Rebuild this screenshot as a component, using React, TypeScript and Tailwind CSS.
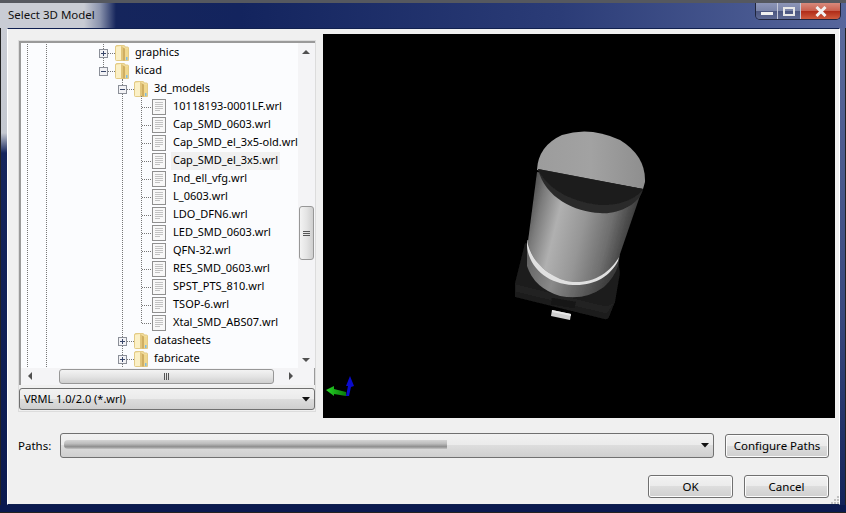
import React from 'react';

type Row = {
  label: string;
  kind: 'folder' | 'file';
  level: 0 | 1 | 2;
  box?: 'plus' | 'minus';
  guides: number[];
  selected?: boolean;
};

const files = [
  '10118193-0001LF.wrl',
  'Cap_SMD_0603.wrl',
  'Cap_SMD_el_3x5-old.wrl',
  'Cap_SMD_el_3x5.wrl',
  'Ind_ell_vfg.wrl',
  'L_0603.wrl',
  'LDO_DFN6.wrl',
  'LED_SMD_0603.wrl',
  'QFN-32.wrl',
  'RES_SMD_0603.wrl',
  'SPST_PTS_810.wrl',
  'TSOP-6.wrl',
  'Xtal_SMD_ABS07.wrl',
];

const rows: Row[] = [
  { label: 'graphics', kind: 'folder', level: 0, box: 'plus', guides: [82] },
  { label: 'kicad', kind: 'folder', level: 0, box: 'minus', guides: [] },
  { label: '3d_models', kind: 'folder', level: 1, box: 'minus', guides: [101] },
  ...files.map((label): Row => ({
    label,
    kind: 'file',
    level: 2,
    guides: [101],
    selected: label === 'Cap_SMD_el_3x5.wrl',
  })),
  { label: 'datasheets', kind: 'folder', level: 1, box: 'plus', guides: [101] },
  { label: 'fabricate', kind: 'folder', level: 1, box: 'plus', guides: [101] },
];

const Folder = ({ x }: { x: number }) => (
  <g transform={`translate(${x} 1)`}>
    <path d="M0.5 2 Q0.5 0.5 2 0.5 L9 0.5 Q10 0.5 10 2 L12.5 2 Q13.5 2 13.5 3 L13.5 15.5 L1.5 15.5 Q0.5 15.5 0.5 14.5 Z" fill="#f2dd9c" stroke="#e3cb86" />
    <path d="M1 2 L6 1 L6 15 L1 15 Z" fill="#fbf0c6" />
    <path d="M6 1 L8 2 L8 15.5 L6 15.5 Z" fill="#e2c67c" />
    <path d="M8 2.5 L10 3.5 L10 15.5 L8 15.5 Z" fill="#cfae62" />
    <path d="M10 4 L13 4 L13 15 L10 15 Z" fill="#f0d88f" />
    <rect x="11" y="12" width="1.5" height="3" fill="#7fbbe0" />
  </g>
);

const FileIcon = ({ x }: { x: number }) => (
  <g transform={`translate(${x} 1)`} shapeRendering="crispEdges">
    <rect x="0.5" y="0.5" width="13" height="15" rx="1" fill="#f8f8f8" stroke="#8f8f8f" />
    {[3, 5, 7, 9, 11].map((y) => (
      <line key={y} x1="3" x2={y === 11 ? 8 : 11} y1={y + 0.5} y2={y + 0.5} stroke="#c2c2c2" />
    ))}
  </g>
);

const Expander = ({ x, type }: { x: number; type: 'plus' | 'minus' }) => (
  <g shapeRendering="crispEdges">
    <rect x={x + 0.5} y="5.5" width="8" height="8" fill="#f2f2f5" stroke="#8b8f98" />
    <line x1={x + 2} x2={x + 7} y1="9.5" y2="9.5" stroke="#39476a" />
    {type === 'plus' && <line x1={x + 4.5} x2={x + 4.5} y1="7" y2="12" stroke="#39476a" />}
  </g>
);

const dotted = { stroke: '#777', strokeDasharray: '1 1', shapeRendering: 'crispEdges' as const };

const TreeRow = ({ row }: { row: Row }) => {
  const width = row.level === 0 ? 112 : row.level === 1 ? 131 : 150;
  const isLastFile = row.label === 'Xtal_SMD_ABS07.wrl';
  const boxX = row.level === 0 ? 78 : 97;
  return (
    <div className="flex h-[18px] shrink-0 items-center whitespace-nowrap">
      <svg width={width} height={18} className="shrink-0">
        <line x1="6.5" x2="6.5" y1="0" y2="18" {...dotted} />
        <line x1="25.5" x2="25.5" y1="0" y2="18" {...dotted} />
        {row.guides.map((g) => (
          <line key={g} x1={g + 0.5} x2={g + 0.5} y1="0" y2="18" {...dotted} />
        ))}
        {row.label === 'kicad' && <line x1="82.5" x2="82.5" y1="0" y2="9" {...dotted} />}
        {row.label === 'kicad' && <line x1="101.5" x2="101.5" y1="15" y2="18" {...dotted} />}
        {row.kind === 'folder' && (
          <>
            <line x1={boxX + 9} x2={boxX + 16} y1="9.5" y2="9.5" {...dotted} />
            <Expander x={boxX} type={row.box ?? 'plus'} />
            <Folder x={boxX + 16} />
          </>
        )}
        {row.level === 1 && row.box === 'minus' && <line x1="120.5" x2="120.5" y1="16" y2="18" {...dotted} />}
        {row.kind === 'file' && (
          <>
            <line x1="120.5" x2="120.5" y1="0" y2={isLastFile ? 9 : 18} {...dotted} />
            <line x1="121" x2="131" y1="9.5" y2="9.5" {...dotted} />
            <FileIcon x={131} />
          </>
        )}
      </svg>
      <span className={`flex h-[18px] items-center px-[2px] pb-[1px] text-[11px] text-black ${row.selected ? 'bg-[#f0f0f0]' : ''}`}>
        {row.label}
      </span>
    </div>
  );
};

const Arrow = ({ dir }: { dir: 'up' | 'down' | 'left' | 'right' }) => {
  const points = {
    up: '0,5 8,5 4,1',
    down: '0,1 8,1 4,5',
    left: '6,0 6,8 2,4',
    right: '2,0 2,8 6,4',
  }[dir];
  const vertical = dir === 'up' || dir === 'down';
  return (
    <svg width={vertical ? 9 : 8} height={vertical ? 6 : 9}>
      <polygon points={points} fill="#505050" />
    </svg>
  );
};

const DropArrow = () => (
  <svg width="8" height="5">
    <polygon points="0,0 8,0 4,4.5" fill="#111" />
  </svg>
);

const Button = ({ label, className }: { label: string; className: string }) => (
  <div className={`flex items-center justify-center rounded-[3px] border border-[#707070] bg-[linear-gradient(180deg,#f2f2f2_0%,#ebebeb_48%,#dddddd_50%,#cfcfcf_100%)] text-[11.5px] text-black shadow-[inset_0_0_0_1px_#fcfcfc] ${className}`}>
    {label}
  </div>
);

const Model = () => (
  <svg viewBox="323 34 512 384" width="512" height="384" className="block">
    <defs>
      <linearGradient id="body" gradientUnits="userSpaceOnUse" x1="526" y1="212" x2="630" y2="238">
        <stop offset="0" stopColor="#4e4e4e" />
        <stop offset="0.12" stopColor="#7c7c7c" />
        <stop offset="0.3" stopColor="#b0b0b0" />
        <stop offset="0.55" stopColor="#969696" />
        <stop offset="0.8" stopColor="#6e6e6e" />
        <stop offset="1" stopColor="#3a3a3a" />
      </linearGradient>
      <linearGradient id="lower" x1="0" y1="0" x2="1" y2="0.2">
        <stop offset="0" stopColor="#5c5c5c" />
        <stop offset="0.4" stopColor="#8a8a8a" />
        <stop offset="1" stopColor="#3a3a3a" />
      </linearGradient>
      <linearGradient id="top" x1="0" y1="0" x2="1" y2="0">
        <stop offset="0" stopColor="#9c9c9c" />
        <stop offset="0.5" stopColor="#a2a2a2" />
        <stop offset="1" stopColor="#8e8e8e" />
      </linearGradient>
      <filter id="soft">
        <feGaussianBlur stdDeviation="0.5" />
      </filter>
      <linearGradient id="axisG" x1="0" y1="0" x2="1" y2="0">
        <stop offset="0" stopColor="#26d626" />
        <stop offset="1" stopColor="#0a7a0a" />
      </linearGradient>
    </defs>
    <g filter="url(#soft)">
      <path d="M525 243 L515 283 L515 297 L604 319 Q608 320 609 317 L615 302 L620 273 L618 260 Z" fill="#1b1b1b" />
      <path d="M516 284 L606 306 L615 302 L607 314 L515 292 Z" fill="#202020" />
      <path d="M552 298 L576 302 L574 308 L551 304 Z" fill="#161616" />
      <path d="M527 240 L527 266 Q534 288 560 296 Q585 301 604 287 Q614 278 618 266 L620 255 Z" fill="url(#lower)" />
      <path d="M537 172 L528 241 C530 262 552 280 573 282 C595 283 610 272 619 257 L642 190 Z" fill="url(#body)" />
      <path d="M527 240 C530 262 552 280 573 282 C595 283 610 272 619 257 L618 261 C610 276 595 286 573 285 C548 284 529 268 527 246 Z" fill="#e0e0e0" />
      <path d="M537 170 Q538 146 562 135 Q590 126 620 140 Q646 156 645 182 L643 189 Z" fill="url(#top)" />
      <path d="M538 169 L643 189 C640 205 616 215 600 213 C575 212 545 198 538 169 Z" fill="#2a2a2a" />
      <path d="M538 169 L643 189 C636 200 616 206 600 205 C578 203 548 192 538 169 Z" fill="#1d1d1d" />
    </g>
    <polygon points="552,310 571,314 570,320 551,316" fill="#cfcfcf" />
    <polygon points="552,310 571,314 571,316 552,312" fill="#e8e8e8" />
    <polygon points="326,390 334,386 334,389 346,392 346,396 334,394 334,396" fill="url(#axisG)" />
    <polygon points="346,396 348,386 346,386 350,376 354,386 351,387 349,396" fill="#0a0acc" />
  </svg>
);

export default function App() {
  return (
    <div className="flex h-[513px] w-[846px] flex-col overflow-hidden bg-[#0b1a4f] font-['Noto_Sans',sans-serif]">
      {/* title bar */}
      <div className="flex h-[28px] shrink-0 justify-between border-t-[3px] border-t-[#55585f] bg-[linear-gradient(90deg,#c9ccd4_0,#c9ccd4_84px,#8a93ad_100px,#15255c_116px,#13245e_240px,#2b3c77_560px,#56669c_846px)]">
        <div className="flex items-center pb-[1px] pl-[8px] text-[11.5px] text-[#111]">Select 3D Model</div>
        <div className="mr-[5px] flex h-[17px] rounded-b-[5px] border border-t-0 border-[#20253c]">
          <div className="flex w-[22px] items-center justify-center rounded-bl-[4px] border-r border-[#c4c8d8] bg-[linear-gradient(180deg,#8d96b8_0%,#7a84a8_48%,#4c5680_52%,#5f6a94_100%)]">
            <div className="mt-[4px] h-[3px] w-[12px] bg-[#f0f0f0]" />
          </div>
          <div className="flex w-[23px] items-center justify-center border-r border-[#c4c8d8] bg-[linear-gradient(180deg,#8d96b8_0%,#7a84a8_48%,#4c5680_52%,#5f6a94_100%)]">
            <div className="h-[9px] w-[12px] border-2 border-[#e8e8e8]" />
          </div>
          <div className="flex w-[39px] items-center justify-center rounded-br-[4px] bg-[linear-gradient(180deg,#d88a7c_0%,#c9604e_48%,#b02c18_52%,#cf5a3c_100%)]">
            <svg width="12" height="11">
              <path d="M1.5 1 L10.5 10 M10.5 1 L1.5 10" stroke="#f2f2f2" strokeWidth="3" />
            </svg>
          </div>
        </div>
      </div>

      <div className="flex h-[477px] shrink-0">
        {/* left window edge */}
        <div className="w-[7px] shrink-0 border-l border-l-[#222] bg-[linear-gradient(180deg,#c9ccd4_0,#c4c8d0_105px,#15255c_125px,#0b1a4f_100%)]" />
        {/* dialog body */}
        <div className="flex w-[833px] shrink-0 flex-col border border-b-[#10204f] border-l-white border-r-white border-t-[#10204f] bg-[#f0f0f0]">
          <div className="flex h-[389px] shrink-0 pl-[10px] pt-[5px]">
            {/* tree and filter */}
            <div className="mt-[6px] flex h-[372px] w-[298px] shrink-0 flex-col border border-[#dcdcdc]">
              <div className="flex h-[344px] shrink-0 flex-col border-b border-l-2 border-r border-t-2 border-[#9a9a9a]">
                <div className="flex h-[325px] shrink-0">
                  <div className="w-[277px] shrink-0 overflow-hidden bg-[#fbfcfe] pt-[1px]">
                    {rows.map((row) => (
                      <TreeRow key={row.label} row={row} />
                    ))}
                  </div>
                  <div className="flex w-[17px] shrink-0 flex-col items-center bg-[#f4f4f6]">
                    <div className="flex h-[17px] shrink-0 items-center justify-center">
                      <Arrow dir="up" />
                    </div>
                    <div className="mt-[146px] flex h-[54px] w-[15px] shrink-0 flex-col items-center justify-center gap-[1px] rounded-[3px] border border-[#979797] bg-[linear-gradient(90deg,#f3f3f3,#e4e4e4_50%,#cfcfcf)]">
                      <div className="h-px w-[7px] bg-[#555]" />
                      <div className="h-px w-[7px] bg-[#555]" />
                      <div className="h-px w-[7px] bg-[#555]" />
                    </div>
                    <div className="mt-auto flex h-[17px] shrink-0 items-center justify-center">
                      <Arrow dir="down" />
                    </div>
                  </div>
                </div>
                <div className="flex h-[17px] shrink-0 items-center bg-[#f4f4f6]">
                  <div className="flex w-[17px] shrink-0 justify-center">
                    <Arrow dir="left" />
                  </div>
                  <div className="ml-[21px] flex h-[15px] w-[215px] shrink-0 items-center justify-center gap-[1px] rounded-[3px] border border-[#979797] bg-[linear-gradient(180deg,#f3f3f3,#e4e4e4_50%,#cfcfcf)]">
                    <div className="h-[7px] w-px bg-[#555]" />
                    <div className="h-[7px] w-px bg-[#555]" />
                    <div className="h-[7px] w-px bg-[#555]" />
                  </div>
                  <div className="ml-[8px] flex w-[17px] shrink-0 justify-center">
                    <Arrow dir="right" />
                  </div>
                </div>
              </div>
              <div className="mt-[3px] flex h-[22px] shrink-0 items-center justify-between rounded-[3px] border border-[#707070] bg-[linear-gradient(180deg,#f2f2f2_0%,#ebebeb_48%,#dddddd_50%,#cfcfcf_100%)] pl-[4px] pr-[4px] text-[11px] text-black">
                <span>VRML 1.0/2.0 (*.wrl)</span>
                <DropArrow />
              </div>
            </div>
            {/* 3D preview */}
            <div className="ml-[7px] h-[384px] w-[512px] shrink-0 bg-black">
              <Model />
            </div>
          </div>

          {/* paths row */}
          <div className="mt-[15px] flex h-[25px] shrink-0 items-center pl-[10px]">
            <span className="w-[42px] shrink-0 text-[11.5px] text-black">Paths:</span>
            <div className="flex h-[25px] w-[654px] shrink-0 items-center justify-between rounded-[3px] border border-[#707070] bg-[linear-gradient(180deg,#f2f2f2_0%,#ebebeb_48%,#dddddd_50%,#cfcfcf_100%)] pl-[3px] pr-[4px]">
              <div className="mb-[2px] h-[9px] w-[383px] rounded-l-[4px] bg-[linear-gradient(180deg,#d4d4d4_0%,#bdbdbd_40%,#8e8e8e_75%,#c6c6c6_100%)] blur-[0.5px]" />
              <DropArrow />
            </div>
            <Button label="Configure Paths" className="ml-[11px] h-[24px] w-[104px]" />
          </div>

          {/* dialog buttons */}
          <div className="relative mt-[17px] flex flex-1 items-start justify-end pr-[10px]">
            <Button label="OK" className="h-[23px] w-[85px]" />
            <Button label="Cancel" className="ml-[11px] h-[23px] w-[85px]" />
            <div className="absolute bottom-0 right-0 grid grid-cols-3 gap-px">
              {[0, 1, 2, 3, 4, 5, 6, 7, 8].map((n) => (
                <div key={n} className={`h-[2px] w-[2px] ${n === 0 || n === 1 || n === 3 ? 'bg-transparent' : 'bg-[#c0c0c0]'}`} />
              ))}
            </div>
          </div>
        </div>
        {/* right window edge */}
        <div className="w-[6px] shrink-0 border-r border-r-[#222] bg-[linear-gradient(180deg,#5a6a9c_0,#39497f_60%,#14245a_100%)]" />
      </div>

      <div className="h-[8px] shrink-0 border-b border-b-[#222] bg-[#0b1a4f]" />
    </div>
  );
}
